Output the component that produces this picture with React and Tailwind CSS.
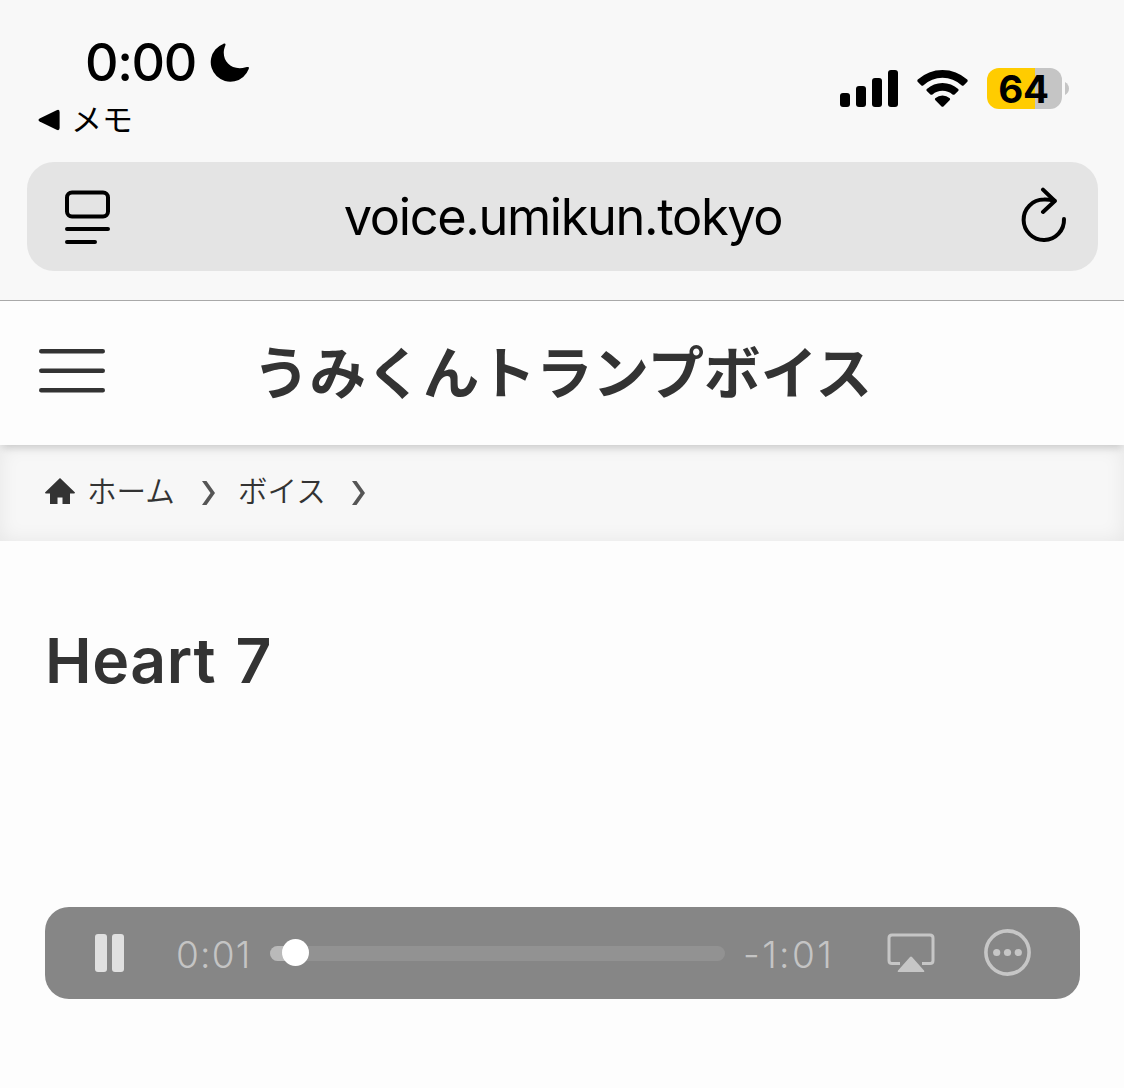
import React from 'react';

const StatusBar = () => {
  return (
    <div className="h-[162px] flex justify-between pl-[38px] pr-[55px] text-black">
      <div className="pt-[36px]">
        <div className="h-[52px] pl-[47px] flex items-center">
          <span className="w-[125px] mt-[2px] text-[52px] leading-[52px] font-medium tracking-[-1.4px] whitespace-nowrap">0:00</span>
          <svg className="mt-[2px]" width="40" height="40" viewBox="0 0 40 40">
            <path d="M13.2 .9C15 .2 16 .8 15.3 2.4C9.8 15.5 19.5 28.6 35.8 24.3C38.6 23.4 39.4 24 38.7 26A19.6 19.6 0 1 1 13.2 .9Z" />
          </svg>
        </div>
        <div className="h-[64px] flex items-center">
          <svg width="22" height="22" viewBox="0 0 22 22">
            <path d="M1.6 9.6L18.6 1.2Q21.6 0 21.6 3V19Q21.6 22 18.6 20.8L1.6 12.4Q-.6 11 1.6 9.6Z" />
          </svg>
          <span className="ml-[11px] text-[31px] leading-[30px] font-normal">メモ</span>
        </div>
      </div>
      <div className="mt-[68px] h-[41px] flex">
        <svg width="58" height="41" viewBox="0 0 58 41">
          <rect x="0" y="25" width="10" height="14" rx="3" />
          <rect x="16" y="18" width="10" height="21" rx="3" />
          <rect x="32" y="10" width="10" height="29" rx="3" />
          <rect x="48" y="2" width="10" height="37" rx="3" />
        </svg>
        <svg className="ml-[19px]" width="51" height="41" viewBox="0 0 51 41">
          <path d="M.8 11.6Q-.2 12.8 .9 14L4.4 17.5Q5.4 18.3 6.5 17.3Q14.5 9.7 25.5 9.7T44.5 17.3Q45.6 18.3 46.6 17.5L50.1 14Q51.2 12.8 50.2 11.6Q39.6 2 25.5 2T.8 11.6Z" />
          <path d="M9.8 21Q8.8 22 9.8 23L13.4 26.4Q14.4 27.3 15.5 26.4Q19.8 22.7 25.5 22.7T35.5 26.4Q36.6 27.3 37.6 26.4L41.2 23Q42.2 22 41.2 21Q34.5 15 25.5 15T9.8 21Z" />
          <path d="M18.2 30.2Q17.4 31.2 18.4 32.2L24.3 38.2Q25.5 39.4 26.7 38.2L32.6 32.2Q33.6 31.2 32.8 30.2Q29.5 27.6 25.5 27.6T18.2 30.2Z" />
        </svg>
        <div className="ml-[19px] w-[75px] h-[41px] rounded-[12px] bg-[linear-gradient(90deg,#ffcc00_48px,#c5c5c5_48px)] flex items-center justify-center pr-[2px]">
          <span className="mt-px text-[38.5px] leading-[41px] font-bold tracking-[-0.3px]">64</span>
        </div>
        <svg className="ml-[3px] mt-[14px]" width="4" height="13" viewBox="0 0 4 13" fill="#c5c5c5">
          <path d="M0 0Q4 2.5 4 6.5T0 13Z" />
        </svg>
      </div>
    </div>
  );
};

const AddressBar = () => {
  return (
    <div className="ml-[27px] mr-[26px] h-[109px] rounded-[27px] bg-[#e4e4e4] pl-[38px] pr-[31px] flex items-center justify-between text-black">
      <svg width="46" height="54" viewBox="0 0 46 54" fill="none" stroke="black" strokeWidth="4" strokeLinecap="round">
        <rect x="2" y="2.5" width="41" height="24" rx="5" />
        <path d="M2 39H43M2 52H30" />
      </svg>
      <span className="mt-px ml-[-6px] text-[50.5px] leading-[60px] tracking-[-1.35px] whitespace-nowrap">voice.umikun.tokyo</span>
      <svg className="mt-[-3px]" width="46" height="56" viewBox="0 0 46 56" fill="none" stroke="black" strokeWidth="4" strokeLinecap="round" strokeLinejoin="round">
        <path d="M43 32A20.2 20.2 0 1 1 22.8 12.6Q28 12.4 33.5 13.8" />
        <path d="M22 2.6L33.8 14L22 25" />
      </svg>
    </div>
  );
};

const SiteHeader = () => {
  return (
    <header className="relative h-[144px] bg-[#fdfdfd] shadow-[0_6px_7px_-3px_rgba(0,0,0,0.14)] flex items-center">
      <svg className="ml-[39px] mt-[-5px]" width="66" height="44" viewBox="0 0 66 44" stroke="#333" strokeWidth="4.4" strokeLinecap="round">
        <path d="M2.2 2.3H63.8M2.2 21.8H63.8M2.2 41.2H63.8" />
      </svg>
      <h1 className="ml-[148px] mt-px text-[56.6px] leading-[80px] font-bold whitespace-nowrap">うみくんトランプボイス</h1>
    </header>
  );
};

const Chevron = () => (
  <svg className="mt-[4px]" width="14" height="24" viewBox="0 0 14 24" fill="#555">
    <path d="M0 0H4.5L13 12L4.5 24H0L8.5 12Z" />
  </svg>
);

const Breadcrumb = () => {
  return (
    <nav className="h-[96px] bg-[#f7f7f7] shadow-[inset_0_0_20px_rgba(0,0,0,0.07)] pl-[45px] pb-[4px] flex items-center text-[29.6px] leading-[40px] font-[350]">
      <svg width="30" height="26" viewBox="0 0 30 26" fill="#333">
        <path d="M15 0L30 14.5Q30 15.5 29 15.5H25V26H17.5V19.5H12.5V26H5V15.5H1Q0 15.5 0 14.5Z" />
      </svg>
      <span className="ml-[12px] w-[115px]">ホーム</span>
      <Chevron />
      <span className="ml-[22px] w-[114px]">ボイス</span>
      <Chevron />
    </nav>
  );
};

const AudioPlayer = () => {
  return (
    <div className="ml-[45px] mr-[44px] h-[92px] rounded-[24px] bg-[#868686] pl-[50px] flex items-center text-[#c4c4c4] text-[37px] leading-[40px] font-[350]">
      <div className="flex gap-[5px]">
        <div className="w-[12px] h-[38px] rounded-[3px] bg-[#e0e0e0]"></div>
        <div className="w-[12px] h-[38px] rounded-[3px] bg-[#e0e0e0]"></div>
      </div>
      <span className="ml-[52px] w-[94px] mt-[3px] tracking-[1.2px] whitespace-nowrap">0:01</span>
      <div className="relative w-[455px] h-[15px] rounded-full bg-[#929292]">
        <div className="w-[26px] h-[15px] rounded-l-full bg-[#bababa]"></div>
        <div className="absolute left-[12px] top-[-7px] w-[27px] h-[27px] rounded-full bg-white"></div>
      </div>
      <span className="ml-[18px] w-[144px] mt-[3px] tracking-[2.4px] whitespace-nowrap">-1:01</span>
      <svg width="48" height="40" viewBox="0 0 48 40" fill="none" stroke="#c6c6c6" strokeWidth="3">
        <path d="M13 30.5H5Q2 30.5 2 27.5V5Q2 2 5 2H43Q46 2 46 5V27.5Q46 30.5 43 30.5H35" />
        <path d="M23 24Q24 22.8 25 24L37 37.5Q38 39 36 39H12Q10 39 11 37.5Z" fill="#c6c6c6" stroke="none" />
      </svg>
      <svg className="ml-[49px] mt-[-2px]" width="47" height="47" viewBox="0 0 47 47" fill="#c6c6c6">
        <circle cx="23.5" cy="23.5" r="21.6" fill="none" stroke="#c6c6c6" strokeWidth="3.6" />
        <circle cx="12.7" cy="23.5" r="3.6" />
        <circle cx="23.5" cy="23.5" r="3.6" />
        <circle cx="34.3" cy="23.5" r="3.6" />
      </svg>
    </div>
  );
};

const App = () => {
  return (
    <div className="w-[1124px] h-[1088px] overflow-hidden bg-[#fdfdfd] text-[#333] font-['Inter','Noto_Sans_CJK_JP',sans-serif]">
      <div className="h-[301px] bg-[#f8f8f8] border-b border-[#a9a9a9]">
        <StatusBar />
        <AddressBar />
      </div>
      <SiteHeader />
      <Breadcrumb />
      <main className="pt-[80px]">
        <h2 className="h-[286px] pl-[45px] text-[62.5px] leading-[79px] font-[560] tracking-[0.6px] [word-spacing:3px]">Heart 7</h2>
        <AudioPlayer />
      </main>
    </div>
  );
};

export default App;
